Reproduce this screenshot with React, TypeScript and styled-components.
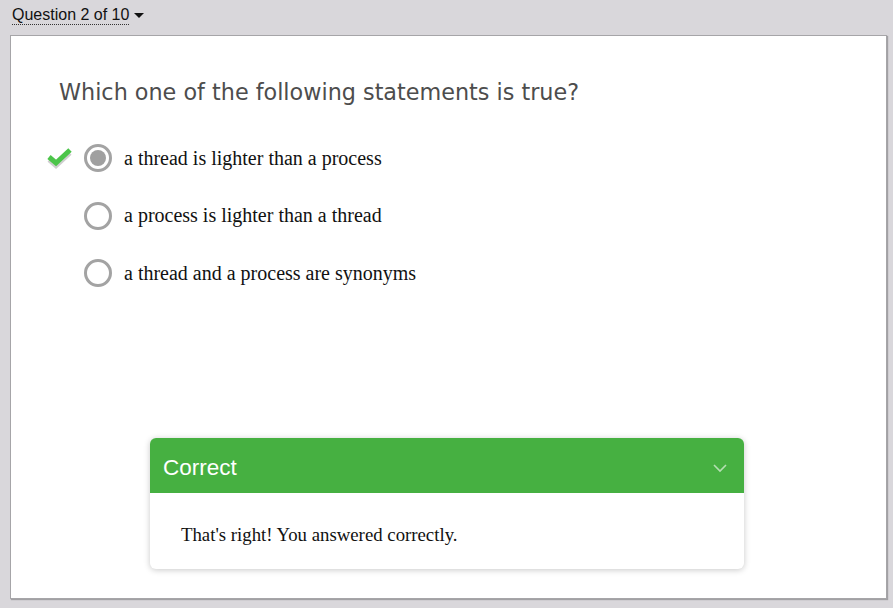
import React from 'react'
import styled, { createGlobalStyle } from 'styled-components'

const GlobalStyle = createGlobalStyle`
  html, body {
    margin: 0;
    padding: 0;
    background: #d9d7db;
  }
  #root {
    height: 608px;
  }
`

const Page = styled.div`
  height: 608px;
  display: flex;
  flex-direction: column;
  box-sizing: border-box;
  padding: 0 6px 9px 10px;
`

const TopBar = styled.div`
  height: 35px;
  display: flex;
  align-items: flex-start;
  padding: 6px 0 0 2px;
  box-sizing: border-box;
`

const QuestionPicker = styled.span`
  font-family: 'Liberation Sans', Arial, sans-serif;
  font-size: 16px;
  color: #111;
  border-bottom: 1px dotted #333;
  line-height: 18px;
`

const Caret = styled.span`
  display: inline-block;
  width: 0;
  height: 0;
  margin: 7px 0 0 5px;
  border-left: 5px solid transparent;
  border-right: 5px solid transparent;
  border-top: 5px solid #111;
`

const Card = styled.div`
  flex: 1;
  background: #fff;
  border: 1px solid #a6a5a8;
  box-shadow: 1px 1px 1px rgba(0, 0, 0, 0.25);
  display: flex;
  flex-direction: column;
  padding: 43px 0 29px 0;
  box-sizing: border-box;
`

const Question = styled.h2`
  margin: 0 0 39px 48px;
  font-family: 'DejaVu Sans', Verdana, sans-serif;
  font-weight: normal;
  font-size: 22.3px;
  line-height: 26px;
  color: #4d4d4d;
`

const Options = styled.div`
  display: flex;
  flex-direction: column;
  gap: 29.5px;
`

const Option = styled.label`
  display: flex;
  align-items: center;
  height: 28px;
`

const Marker = styled.span`
  width: 28px;
  margin-left: 34px;
  display: flex;
  justify-content: center;
`

const Radio = styled.span<{ $checked?: boolean }>`
  width: 28px;
  height: 28px;
  box-sizing: border-box;
  border-radius: 50%;
  border: 3px solid #a3a3a3;
  margin-left: 11px;
  display: flex;
  align-items: center;
  justify-content: center;
  &::after {
    content: '';
    display: ${p => (p.$checked ? 'block' : 'none')};
    width: 16px;
    height: 16px;
    border-radius: 50%;
    background: #a0a0a0;
  }
`

const OptionText = styled.span`
  margin-left: 12px;
  font-family: 'Liberation Serif', 'Times New Roman', serif;
  font-size: 20px;
  color: #111;
`

const Feedback = styled.div`
  margin: auto 0 0 139px;
  width: 594px;
  border-radius: 6px;
  background: #fff;
  box-shadow: 0 1px 6px rgba(0, 0, 0, 0.22);
  overflow: hidden;
`

const FeedbackHeader = styled.div`
  height: 55px;
  background: #46b041;
  display: flex;
  align-items: center;
  justify-content: space-between;
  padding: 5px 17px 0 13px;
  box-sizing: border-box;
  font-family: 'Liberation Sans', Arial, sans-serif;
  font-size: 22.5px;
  color: #fff;
`

const FeedbackBody = styled.div`
  padding: 32px 31px 24px;
  font-family: 'Liberation Serif', 'Times New Roman', serif;
  font-size: 18.8px;
  line-height: 20px;
  color: #111;
`

const CheckIcon = () => (
  <svg width="27" height="24" viewBox="0 0 27 24">
    <path d="M3 14 L10 20 L24 7" fill="none" stroke="#cfcfcf" strokeWidth="4.5" />
    <path d="M3 11 L10 17 L24 4" fill="none" stroke="#4cc54a" strokeWidth="5" />
  </svg>
)

const Chevron = () => (
  <svg width="14" height="9" viewBox="0 0 14 9">
    <path d="M1 1 L7 7 L13 1" fill="none" stroke="rgba(255,255,255,0.6)" strokeWidth="1.6" />
  </svg>
)

const answers = [
  { text: 'a thread is lighter than a process', checked: true },
  { text: 'a process is lighter than a thread', checked: false },
  { text: 'a thread and a process are synonyms', checked: false },
]

export default function App() {
  return (
    <>
      <GlobalStyle />
      <Page>
        <TopBar>
          <QuestionPicker>Question 2 of 10</QuestionPicker>
          <Caret />
        </TopBar>
        <Card>
          <Question>Which one of the following statements is true?</Question>
          <Options>
            {answers.map(a => (
              <Option key={a.text}>
                <Marker>{a.checked && <CheckIcon />}</Marker>
                <Radio $checked={a.checked} />
                <OptionText>{a.text}</OptionText>
              </Option>
            ))}
          </Options>
          <Feedback>
            <FeedbackHeader>
              <span>Correct</span>
              <Chevron />
            </FeedbackHeader>
            <FeedbackBody>That's right! You answered correctly.</FeedbackBody>
          </Feedback>
        </Card>
      </Page>
    </>
  )
}
